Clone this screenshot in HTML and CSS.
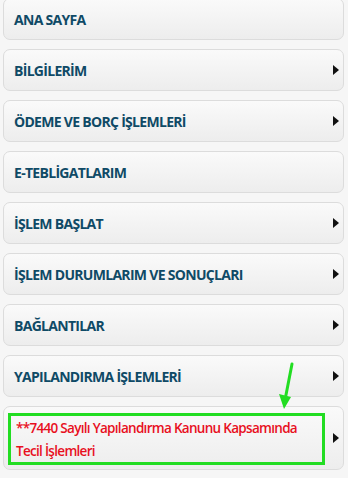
FILE: index.html
```html
<!DOCTYPE html>
<html>
<head>
  <meta charset="UTF-8" />
  <title>Menü</title>
  <link rel="stylesheet" href="styles.css">
</head>
<body>

  <ul class="menu">
    <li class="item"><a href="#">ANA SAYFA</a></li>
    <li class="item sub"><a href="#">BİLGİLERİM</a></li>
    <li class="item sub"><a href="#">ÖDEME VE BORÇ İŞLEMLERİ</a></li>
    <li class="item"><a href="#">E-TEBLİGATLARIM</a></li>
    <li class="item sub"><a href="#">İŞLEM BAŞLAT</a></li>
    <li class="item sub"><a href="#">İŞLEM DURUMLARIM VE SONUÇLARI</a></li>
    <li class="item sub"><a href="#">BAĞLANTILAR</a></li>
    <li class="item sub"><a href="#">YAPILANDIRMA İŞLEMLERİ</a></li>
    <li class="item sub tall">
      <a href="#" class="highlight">**7440 Sayılı Yapılandırma Kanunu Kapsamında Tecil İşlemleri</a>
      <svg class="pointer" width="20" height="50" viewBox="0 0 20 50">
        <line x1="16" y1="2" x2="9" y2="38" stroke="#22dd22" stroke-width="3" stroke-linecap="round" />
        <polygon points="3,32 15,35 8,47" fill="#22dd22" />
      </svg>
    </li>
  </ul>

</body>
</html>
```

FILE: styles.css
```css
body {
  margin: 0;
  background: #f6f6f6;
  font-family: "Open Sans", sans-serif;
}

.menu {
  list-style: none;
  margin: -2px 0 0 0;
  padding: 0 4px 0 3px;
  display: flex;
  flex-direction: column;
  gap: 9px;
}

.item {
  position: relative;
  height: 42px;
  box-sizing: border-box;
  border: 1px solid #dcdcdc;
  border-radius: 7px;
  background: linear-gradient(#fafafa, #ededed);
  display: flex;
  align-items: center;
}

.item a {
  color: #0f4a66;
  font-weight: bold;
  font-size: 14px;
  letter-spacing: -0.7px;
  text-decoration: none;
  padding-left: 10px;
}

.sub::after {
  content: '';
  position: absolute;
  right: 4px;
  top: 50%;
  margin-top: -5px;
  border-left: 6px solid #111;
  border-top: 5px solid transparent;
  border-bottom: 5px solid transparent;
}

.tall {
  height: 64px;
  padding: 6px 0 4px 4px;
  align-items: stretch;
}

.item .highlight {
  width: 317px;
  box-sizing: border-box;
  border: 3px solid #22dd22;
  color: #e8101e;
  font-weight: 600;
  font-size: 13.5px;
  line-height: 23px;
  padding: 1px 0 0 5px;
  letter-spacing: -0.7px;
}

.pointer {
  position: absolute;
  left: 272px;
  top: -45px;
}
```
